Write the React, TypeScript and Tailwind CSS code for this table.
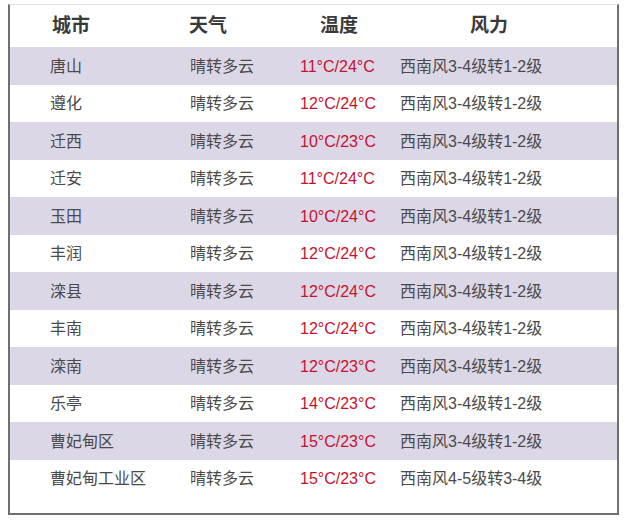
import React from 'react';

interface Row {
  city: string;
  weather: string;
  temp: string;
  wind: string;
}

const rows: Row[] = [
  { city: '唐山', weather: '晴转多云', temp: '11°C/24°C', wind: '西南风3-4级转1-2级' },
  { city: '遵化', weather: '晴转多云', temp: '12°C/24°C', wind: '西南风3-4级转1-2级' },
  { city: '迁西', weather: '晴转多云', temp: '10°C/23°C', wind: '西南风3-4级转1-2级' },
  { city: '迁安', weather: '晴转多云', temp: '11°C/24°C', wind: '西南风3-4级转1-2级' },
  { city: '玉田', weather: '晴转多云', temp: '10°C/24°C', wind: '西南风3-4级转1-2级' },
  { city: '丰润', weather: '晴转多云', temp: '12°C/24°C', wind: '西南风3-4级转1-2级' },
  { city: '滦县', weather: '晴转多云', temp: '12°C/24°C', wind: '西南风3-4级转1-2级' },
  { city: '丰南', weather: '晴转多云', temp: '12°C/24°C', wind: '西南风3-4级转1-2级' },
  { city: '滦南', weather: '晴转多云', temp: '12°C/23°C', wind: '西南风3-4级转1-2级' },
  { city: '乐亭', weather: '晴转多云', temp: '14°C/23°C', wind: '西南风3-4级转1-2级' },
  { city: '曹妃甸区', weather: '晴转多云', temp: '15°C/23°C', wind: '西南风3-4级转1-2级' },
  { city: '曹妃甸工业区', weather: '晴转多云', temp: '15°C/23°C', wind: '西南风4-5级转3-4级' },
];

const cjk = "font-['Liberation_Sans','Noto_Sans_CJK_SC',sans-serif]";

export default function App() {
  return (
    <div className="w-[626px] h-[520px] bg-white pt-[4px] pl-[8px]">
      <div className="w-[611px] h-[511px] border-l-2 border-r-2 border-b-2 border-t border-l-[#6f6f6f] border-r-[#6f6f6f] border-b-[#6f6f6f] border-t-[#e2e2e2] pb-[11px]">
        {/* Header */}
        <div className={`flex items-center h-[42px] text-[19px] font-semibold text-[#3a3a3a] ${cjk}`}>
          <div className="w-[176px] pl-[42px]">城市</div>
          <div className="w-[128px] pl-[3px]">天气</div>
          <div className="w-[150px] pl-[6px]">温度</div>
          <div className="flex-1 pl-[6px]">风力</div>
        </div>

        {rows.map((r, i) => (
          <div
            key={r.city}
            className={`flex items-center h-[37.5px] pt-[2px] text-[16px] text-[#4a4a4a] ${cjk} ${i % 2 === 0 ? 'bg-[#dcd7e7]' : 'bg-white'}`}
          >
            <div className="w-[180px] pl-[40px]">{r.city}</div>
            <div className="w-[110px]">{r.weather}</div>
            <div className="w-[100px] text-[#c8102e]">{r.temp}</div>
            <div className="flex-1">{r.wind}</div>
          </div>
        ))}
      </div>
    </div>
  );
}
